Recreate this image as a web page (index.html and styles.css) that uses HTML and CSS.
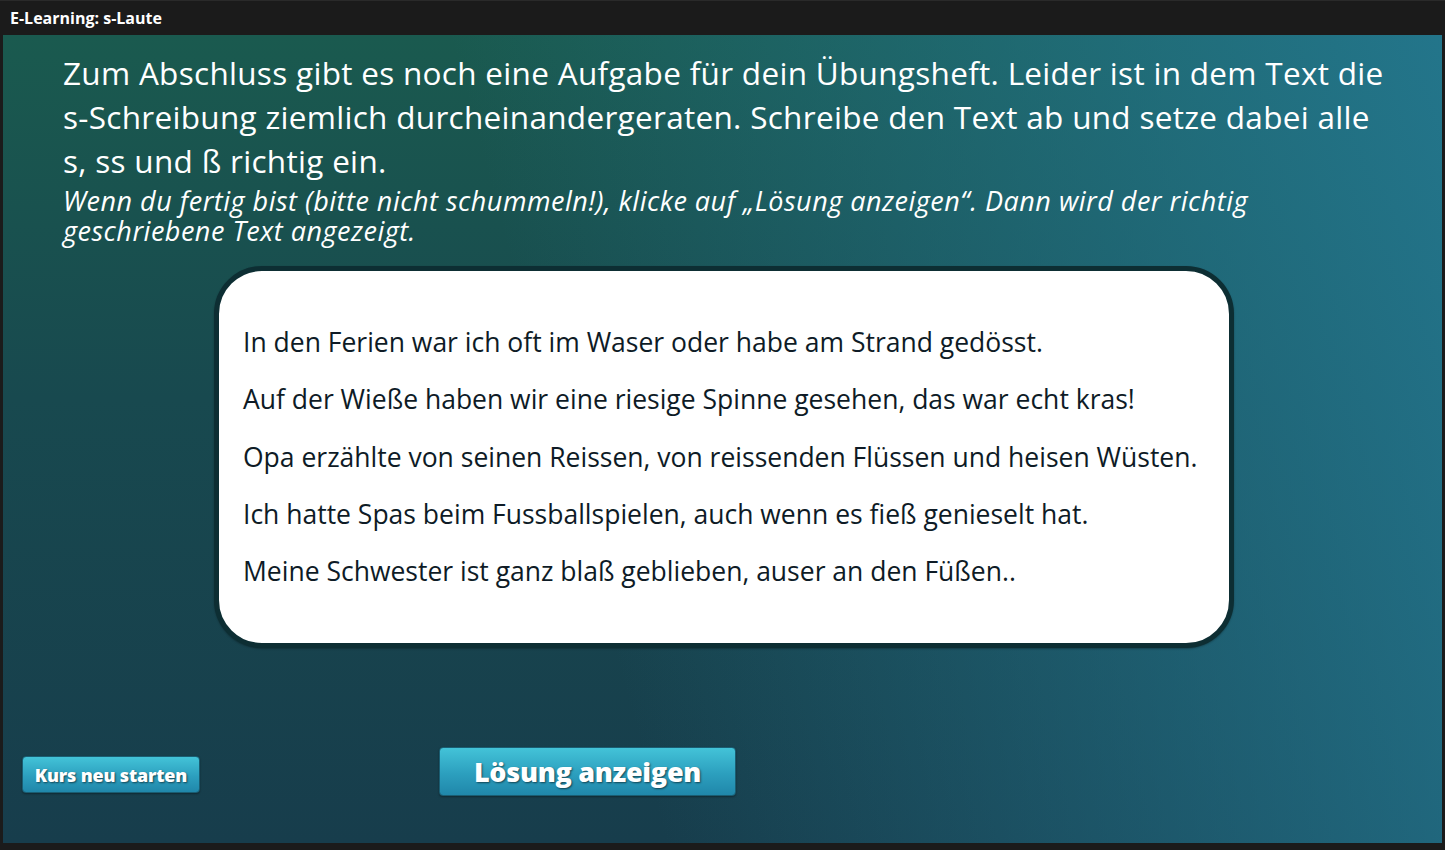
FILE: index.html
```html
<!DOCTYPE html>
<html lang="de">
<head>
<meta charset="utf-8">
<title>E-Learning: s-Laute</title>
<link rel="stylesheet" href="styles.css">
</head>
<body>
<div class="window">
  <header class="titlebar">E-Learning: s-Laute</header>
  <main class="panel">
    <section class="intro">
      <p class="lead">Zum Abschluss gibt es noch eine Aufgabe für dein Übungsheft. Leider ist in dem Text die<br>s-Schreibung ziemlich durcheinandergeraten. Schreibe den Text ab und setze dabei alle<br>s, ss und ß richtig ein.</p>
      <p class="hint"><span class="hint-line">Wenn du fertig bist (bitte nicht schummeln!), klicke auf „Lösung anzeigen“. Dann wird der richtig</span><span class="hint-line">geschriebene Text angezeigt.</span></p>
    </section>
    <div class="card">
      <p>In den Ferien war ich oft im Waser oder habe am Strand gedösst.</p>
      <p>Auf der Wieße haben wir eine riesige Spinne gesehen, das war echt kras!</p>
      <p>Opa erzählte von seinen Reissen, von reissenden Flüssen und heisen Wüsten.</p>
      <p>Ich hatte Spas beim Fussballspielen, auch wenn es fieß genieselt hat.</p>
      <p>Meine Schwester ist ganz blaß geblieben, auser an den Füßen..</p>
    </div>
    <footer class="actions">
      <button class="btn btn-small">Kurs neu starten</button>
      <button class="btn btn-large">Lösung anzeigen</button>
    </footer>
  </main>
</div>
</body>
</html>
```
FILE: styles.css
```css
html, body {
  margin: 0;
  padding: 0;
  background: #1b1b1b;
}
body {
  width: 1445px;
  height: 850px;
  overflow: hidden;
  font-family: "Open Sans", "Noto Sans", sans-serif;
}
.window {
  display: flex;
  flex-direction: column;
  height: 850px;
}
.titlebar {
  height: 35px;
  box-sizing: border-box;
  padding: 7px 0 0 10px;
  color: #fff;
  font-weight: 700;
  font-size: 16px;
  line-height: 20px;
  border-top: 1px solid #2a2a2a;
}
.panel {
  margin: 0 3px;
  height: 808px;
  box-sizing: border-box;
  display: flex;
  flex-direction: column;
  padding: 16px 0 0 0;
  background:
    linear-gradient(75deg, rgba(26,92,80,0) 40%, rgba(36,120,145,0.9) 100%),
    linear-gradient(180deg, #1a5a4f 0%, #18494f 45%, #173d4c 100%);
}
.intro {
  padding-left: 60px;
  color: #fff;
}
.lead {
  margin: 0;
  font-size: 31.5px;
  line-height: 44px;
  letter-spacing: 0.3px;
}
.hint {
  margin: 3px 0 0;
  font-style: italic;
  font-size: 27px;
  letter-spacing: 0.5px;
}
.hint-line {
  display: block;
  height: 30px;
  line-height: 30px;
  white-space: nowrap;
}
.card {
  margin: 20px 0 0 211px;
  width: 1020px;
  height: 382px;
  box-sizing: border-box;
  background: #fff;
  border: 5px solid #0d2e33;
  border-radius: 48px;
  padding: 43px 0 0 24px;
  color: #0e1b26;
  box-shadow: 0 1px 2px rgba(0,0,0,0.3);
}
.card p {
  margin: 0;
  font-size: 26.5px;
  line-height: 57.3px;
}
.actions {
  display: flex;
  align-items: flex-start;
  margin-top: auto;
  margin-bottom: 47px;
  padding-left: 19px;
}
.btn {
  font-family: "Open Sans", "Noto Sans", sans-serif;
  font-weight: 800;
  color: #fff;
  border: 1px solid #1a5d72;
  border-radius: 4px;
  background: linear-gradient(180deg, #43c3d8 0%, #2c9fbe 55%, #2087aa 100%);
  text-shadow: 1px 1px 2px rgba(0,0,0,0.55);
  box-shadow: 0 1px 2px rgba(0,0,0,0.35);
  cursor: pointer;
  padding: 0;
}
.btn-small {
  margin-top: 9px;
  width: 178px;
  height: 37px;
  font-size: 18px;
  letter-spacing: -0.2px;
}
.btn-large {
  margin-left: 239px;
  width: 297px;
  height: 49px;
  font-size: 27px;
  letter-spacing: -0.3px;
}
```
